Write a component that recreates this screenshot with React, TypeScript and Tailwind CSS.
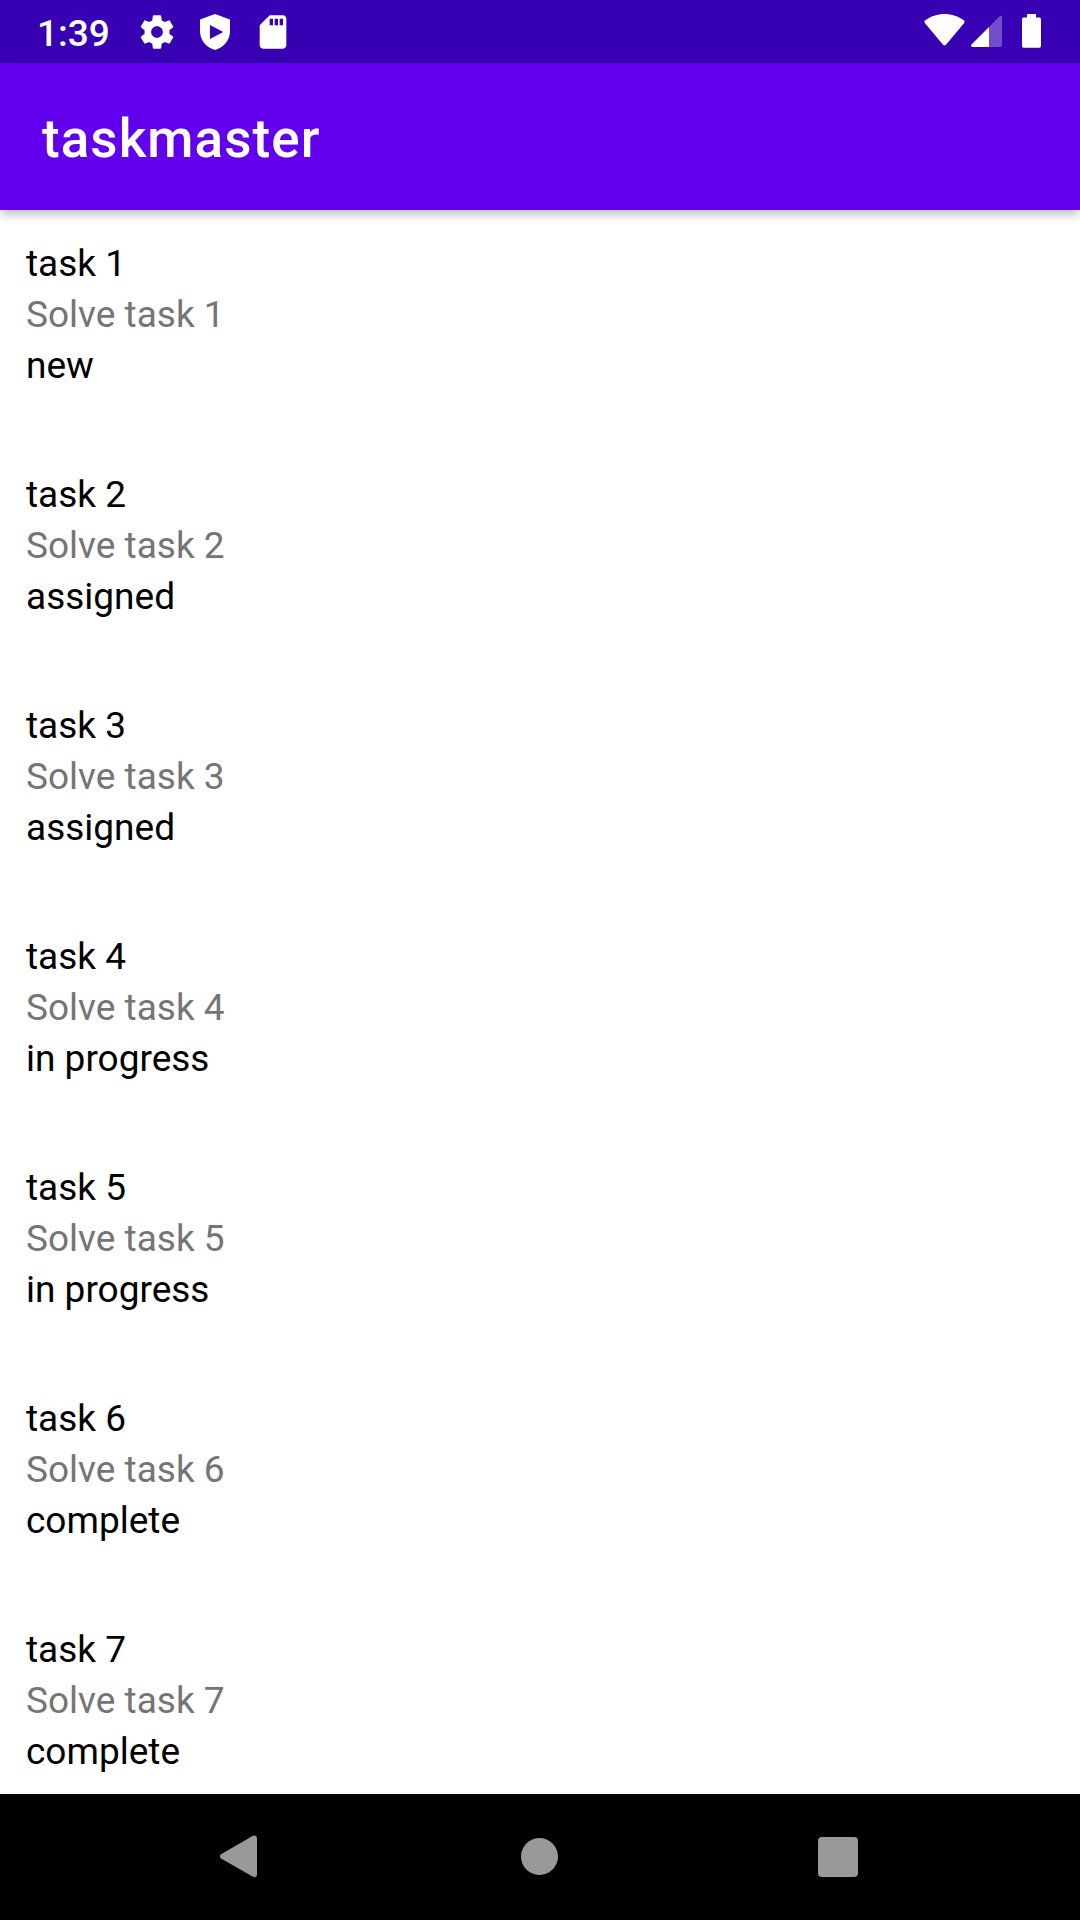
import React from "react";

const tasks = [
  { title: "task 1", body: "Solve task 1", state: "new" },
  { title: "task 2", body: "Solve task 2", state: "assigned" },
  { title: "task 3", body: "Solve task 3", state: "assigned" },
  { title: "task 4", body: "Solve task 4", state: "in progress" },
  { title: "task 5", body: "Solve task 5", state: "in progress" },
  { title: "task 6", body: "Solve task 6", state: "complete" },
  { title: "task 7", body: "Solve task 7", state: "complete" },
];

function GearIcon() {
  return (
    <svg className="ml-[28px] size-[40px]" viewBox="0 0 24 24" fill="currentColor">
      <path d="M19.43 12.98c.04-.32.07-.64.07-.98s-.03-.66-.07-.98l2.11-1.65c.19-.15.24-.42.12-.64l-2-3.46c-.12-.22-.39-.3-.61-.22l-2.49 1c-.52-.4-1.08-.73-1.69-.98l-.38-2.65C14.46 2.18 14.25 2 14 2h-4c-.25 0-.46.18-.49.42l-.38 2.65c-.61.25-1.17.59-1.69.98l-2.49-1c-.23-.09-.49 0-.61.22l-2 3.46c-.13.22-.07.49.12.64l2.11 1.65c-.04.32-.07.65-.07.98s.03.66.07.98l-2.11 1.65c-.19.15-.24.42-.12.64l2 3.46c.12.22.39.3.61.22l2.49-1c.52.4 1.08.73 1.69.98l.38 2.65c.03.24.24.42.49.42h4c.25 0 .46-.18.49-.42l.38-2.65c.61-.25 1.17-.59 1.69-.98l2.49 1c.23.09.49 0 .61-.22l2-3.46c.12-.22.07-.49-.12-.64l-2.11-1.65zM12 15.5c-1.93 0-3.5-1.57-3.5-3.5s1.57-3.5 3.5-3.5 3.5 1.57 3.5 3.5-1.57 3.5-3.5 3.5z" />
    </svg>
  );
}

function ShieldIcon() {
  return (
    <svg className="ml-[23px] h-[36px] w-[30px]" viewBox="0 0 30 36" fill="currentColor">
      <path fillRule="evenodd" d="M15 0L30 5.500V17C30 26 24 33.500 15 36C6 33.500 0 26 0 17V5.500ZM10 11V25L23.300 18Z" />
    </svg>
  );
}

function SdIcon() {
  return (
    <svg className="ml-[23px] size-[40px]" viewBox="0 0 24 24" fill="currentColor">
      <path d="M18 2h-8L4.020 8 4 20c0 1.100.9 2 2 2h12c1.100 0 2-.9 2-2V4c0-1.100-.9-2-2-2zm-6 6h-2V4h2v4zm3 0h-2V4h2v4zm3 0h-2V4h2v4z" />
    </svg>
  );
}

function StatusBar() {
  return (
    <div className="flex h-[63px] items-center justify-between bg-[#3700b3] pr-[38px] pl-[37px] text-white">
      <div className="flex items-center">
        <span className="w-[72px] pt-[3px] text-[37px] leading-[43px] font-medium">1:39</span>
        <GearIcon />
        <ShieldIcon />
        <SdIcon />
      </div>
      <svg className="h-[63px] w-[120px]" viewBox="922 0 120 63" fill="currentColor">
        <path d="M925 20.500C936 11.800 953 11.800 964 20.500Q965.200 21.700 964.200 23L946 44.700Q944.500 46.300 943 44.700L924.800 23Q923.800 21.700 925 20.500Z" />
        <path fillOpacity=".3" d="M989 27L999 16.800Q1002 14.500 1002 17.500V45Q1002 47 1000 47H989Z" />
        <path d="M989 27V47H973Q970 46.500 971.500 44.500Z" />
        <path d="M1027 14H1036V17.500H1039.500Q1041 17.500 1041 19V46Q1041 47.800 1039.500 47.800H1023.500Q1022 47.800 1022 46V19Q1022 17.500 1023.500 17.500H1027Z" />
      </svg>
    </div>
  );
}

function NavBar() {
  return (
    <div className="flex h-[126px] items-center bg-black pb-px pl-[219px] text-[#999999]">
      <svg className="h-[43px] w-[39px]" viewBox="0 0 39 43" fill="currentColor">
        <path d="M2 19.200L33.500 1Q37.500-.8 38 3V39.500Q37.500 43.500 33.500 41.500L2 23.500Q0 21.400 2 19.200Z" />
      </svg>
      <div className="ml-[263px] size-[37px] rounded-full bg-[#999999]" />
      <div className="ml-[260px] size-[40px] rounded-[4px] bg-[#999999]" />
    </div>
  );
}

export default function App() {
  return (
    <div className="flex h-[1920px] w-[1080px] flex-col overflow-hidden bg-white font-['Roboto',sans-serif]">
      <StatusBar />
      <header className="z-10 flex h-[147px] items-center bg-[#6200ee] pt-[4px] pl-[42px] shadow-[0_5px_10px_-1px_rgba(0,0,0,0.28)]">
        <h1 className="text-[53px] leading-[62px] font-medium tracking-[0.02em] text-white">taskmaster</h1>
      </header>
      <main className="flex-1 overflow-hidden px-[26px] pt-[28px] text-[37px] leading-[51px] text-black">
        {tasks.map((task) => (
          <section key={task.title} className="h-[231px]">
            <p>{task.title}</p>
            <p className="text-[#757575]">{task.body}</p>
            <p>{task.state}</p>
          </section>
        ))}
      </main>
      <NavBar />
    </div>
  );
}
